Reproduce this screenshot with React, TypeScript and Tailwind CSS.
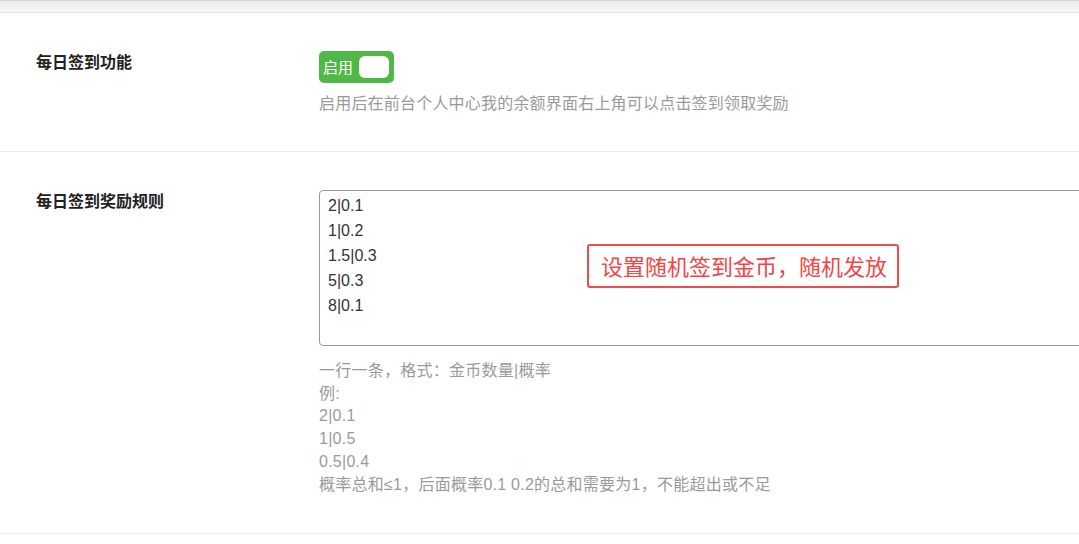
import React from 'react'

const rules = ['2|0.1', '1|0.2', '1.5|0.3', '5|0.3', '8|0.1']

const helpLines = [
  '一行一条，格式：金币数量|概率',
  '例:',
  '2|0.1',
  '1|0.5',
  '0.5|0.4',
  '概率总和≤1，后面概率0.1 0.2的总和需要为1，不能超出或不足',
]

// latin glyphs narrower, so the pipes sit tight like the original
const monoish = '"Liberation Sans", "Noto Sans CJK SC", sans-serif'

function Toggle() {
  return (
    <div className="flex h-[32px] w-[75px] items-center rounded-[5px] bg-[#4fb847] pl-[4px] pr-[5px]">
      <span className="text-[15px] leading-none text-white">启用</span>
      <span className="ml-auto h-[22px] w-[30px] rounded-[6px] bg-white" />
    </div>
  )
}

export default function App() {
  return (
    <div
      className="h-[544px] w-full overflow-hidden bg-white text-[#333]"
      style={{ fontFamily: '"Noto Sans", "Noto Sans CJK SC", sans-serif' }}
    >
      <div className="h-[13px] border-t border-b border-t-[#d4d6dc] border-b-[#e2e2e2] bg-gradient-to-b from-[#eaeaec] to-[#f7f7f7]" />

      <div className="flex border-b border-[#ececec] pt-[38px] pb-[37px]">
        <div className="w-[319px] shrink-0 pl-[36px] text-[16px] leading-[22px] font-bold text-[#222]">每日签到功能</div>
        <div className="flex flex-col">
          <Toggle />
          <p className="mt-[9px] text-[16px] leading-[22px] tracking-[0.2px] text-[#9a9a9a]">启用后在前台个人中心我的余额界面右上角可以点击签到领取奖励</p>
        </div>
      </div>

      <div className="flex border-b border-[#ececec] pt-[38px] pb-[37px]">
        <div className="w-[319px] shrink-0 pl-[36px] text-[16px] leading-[22px] font-bold text-[#222]">每日签到奖励规则</div>
        <div className="flex min-w-[800px] flex-col">
          <div className="relative">
            <textarea
              readOnly
              value={rules.join('\n')}
              className="block h-[156px] w-[800px] resize-none rounded-[4px] border border-[#999] bg-white px-[8px] pt-[2px] text-[16px] leading-[25px] text-[#333] outline-none"
              style={{ fontFamily: monoish }}
            />
            <div className="absolute top-[54px] left-[268px] flex h-[44px] w-[312px] items-center rounded-[3px] border-2 border-[#f24a4a] bg-white pl-[12px] text-[22px] text-[#f04646]">
              设置随机签到金币，随机发放
            </div>
          </div>
          <div className="mt-[14px] text-[16px] leading-[22.7px] tracking-[0.25px] text-[#9a9a9a]" style={{ fontFamily: monoish }}>
            {helpLines.map((line) => (
              <div key={line}>{line}</div>
            ))}
          </div>
        </div>
      </div>
    </div>
  )
}
